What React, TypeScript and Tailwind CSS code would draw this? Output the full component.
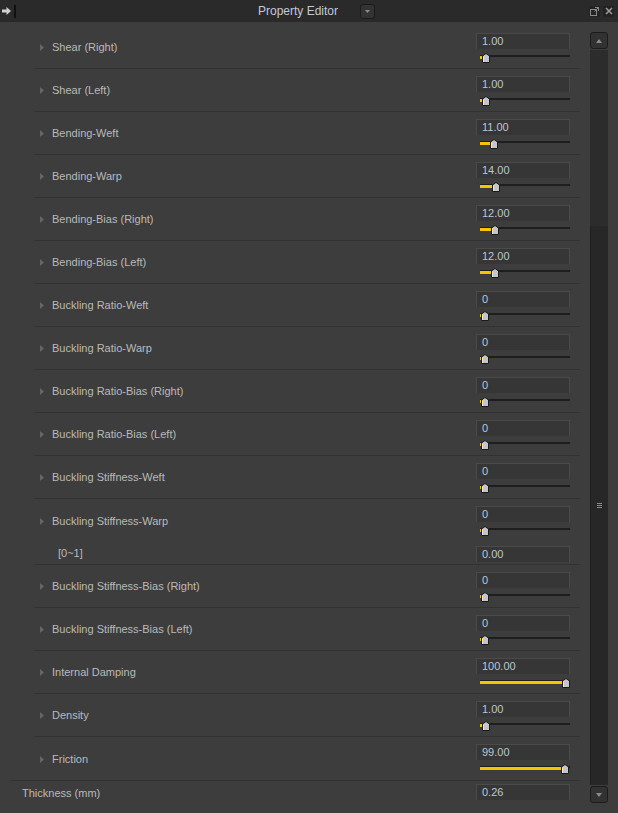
import React from 'react';

type Row =
  | { kind: 'prop'; label: string; value: number; digits?: boolean; border?: boolean }
  | { kind: 'sub'; label: string; value: string };

const rows: Row[] = [
  { kind: 'prop', label: 'Shear (Right)', value: 1, digits: true },
  { kind: 'prop', label: 'Shear (Left)', value: 1, digits: true },
  { kind: 'prop', label: 'Bending-Weft', value: 11, digits: true },
  { kind: 'prop', label: 'Bending-Warp', value: 14, digits: true },
  { kind: 'prop', label: 'Bending-Bias (Right)', value: 12, digits: true },
  { kind: 'prop', label: 'Bending-Bias (Left)', value: 12, digits: true },
  { kind: 'prop', label: 'Buckling Ratio-Weft', value: 0 },
  { kind: 'prop', label: 'Buckling Ratio-Warp', value: 0 },
  { kind: 'prop', label: 'Buckling Ratio-Bias (Right)', value: 0 },
  { kind: 'prop', label: 'Buckling Ratio-Bias (Left)', value: 0 },
  { kind: 'prop', label: 'Buckling Stiffness-Weft', value: 0 },
  { kind: 'prop', label: 'Buckling Stiffness-Warp', value: 0, border: false },
  { kind: 'sub', label: '[0~1]', value: '0.00' },
  { kind: 'prop', label: 'Buckling Stiffness-Bias (Right)', value: 0 },
  { kind: 'prop', label: 'Buckling Stiffness-Bias (Left)', value: 0 },
  { kind: 'prop', label: 'Internal Damping', value: 100, digits: true },
  { kind: 'prop', label: 'Density', value: 1, digits: true },
  { kind: 'prop', label: 'Friction', value: 99, digits: true, border: false },
];

function Caret() {
  return (
    <svg width="4" height="7" viewBox="0 0 4 7" className="shrink-0">
      <polygon points="0,0 4,3.5 0,7" fill="#656565" />
    </svg>
  );
}

function ValueBox({ text }: { text: string }) {
  return (
    <div className="h-[16px] w-[94px] border-x border-t border-[#4a4a4a] bg-[#363636] pl-[5px] text-[11px] leading-[15px] text-[#bcc6d2]">
      {text}
    </div>
  );
}

function Slider({ value }: { value: number }) {
  const left = 1 + value * 0.81;
  return (
    <div className="relative ml-[4px] mt-[4px] h-[10px] w-[90px]">
      <div className="absolute left-0 right-0 top-[2px] h-[2px] bg-[#1e1e1e]" />
      <div className="absolute left-0 top-[3px] h-[3px] bg-[#f6c400]" style={{ width: left + 2 }} />
      <svg width="8" height="10" viewBox="0 0 8 10" className="absolute top-0" style={{ left }}>
        <polygon points="0.5,3 4,0.5 7.5,3 7.5,9.5 0.5,9.5" fill="#c6c6c6" stroke="#1a1a1a" />
        <line x1="1.5" y1="3.5" x2="1.5" y2="9" stroke="#e8e8e8" />
      </svg>
    </div>
  );
}

function PropRow({ label, value, digits, border = true }: { label: string; value: number; digits?: boolean; border?: boolean }) {
  return (
    <div className={`flex h-[43px] ${border ? 'border-b border-[#323232]' : ''}`}>
      <div className="flex flex-1 items-center gap-[8px] pb-[1px] pl-[6px] pt-[2px]">
        <Caret />
        <span className="text-[11px] text-[#bababa]">{label}</span>
      </div>
      <div className="w-[104px] pt-[7px]">
        <ValueBox text={digits ? value.toFixed(2) : String(value)} />
        <Slider value={value} />
      </div>
    </div>
  );
}

function SubRow({ label, value }: { label: string; value: string }) {
  return (
    <div className="flex h-[23px] border-b border-[#323232]">
      <div className="flex flex-1 items-center pl-[24px]">
        <span className="text-[11px] text-[#bababa]">{label}</span>
      </div>
      <div className="w-[104px] pt-[4px]">
        <ValueBox text={value} />
      </div>
    </div>
  );
}

function ScrollButton({ up }: { up: boolean }) {
  return (
    <div className="flex h-[17px] items-center justify-center rounded-[3px] border border-[#1c1c1c] bg-[#323232]">
      <svg width="6" height="4" viewBox="0 0 6 4">
        <polygon points={up ? '0,4 3,0 6,4' : '0,0 3,4 6,0'} fill="#8a8a8a" />
      </svg>
    </div>
  );
}

export default function App() {
  return (
    <div
      className="flex h-[813px] w-[618px] flex-col overflow-hidden bg-[#3d3d3d]"
      style={{ fontFamily: '"Liberation Sans", Arial, sans-serif' }}
    >
      {/* Title bar */}
      <div className="flex h-[22px] shrink-0 items-center bg-[#2a2a2a]">
        <div className="flex w-[258px] items-center gap-[3px] pl-[2px]">
          <svg width="9" height="8" viewBox="0 0 9 8">
            <polygon points="0,2.5 4.5,2.5 4.5,0 9,4 4.5,8 4.5,5.5 0,5.5" fill="#d0d0d0" />
          </svg>
          <div className="h-[13px] w-[2px] bg-[#111111]" />
        </div>
        <span className="text-[12px] text-[#c3c8d6]">Property Editor</span>
        <div className="ml-[22px] flex h-[15px] w-[15px] items-center justify-center rounded-[3px] border border-[#1b1b1b] bg-[#333333]">
          <svg width="5" height="3" viewBox="0 0 5 3">
            <polygon points="0,0 2.5,3 5,0" fill="#8c8c8c" />
          </svg>
        </div>
        <div className="flex-1" />
        <div className="flex items-center gap-[3px] pr-[4px]">
          <div className="flex h-[11px] w-[11px] items-center justify-center bg-[#232323]">
            <svg width="9" height="9" viewBox="0 0 9 9">
              <rect x="0.5" y="2.5" width="6" height="6" fill="none" stroke="#8a8a8a" />
              <polyline points="5,0.5 8.5,0.5 8.5,4" fill="none" stroke="#8a8a8a" />
              <line x1="8.5" y1="0.5" x2="4.5" y2="4.5" stroke="#8a8a8a" />
            </svg>
          </div>
          <div className="flex h-[11px] w-[11px] items-center justify-center bg-[#232323]">
            <svg width="8" height="8" viewBox="0 0 8 8">
              <path d="M1 1 L7 7 M7 1 L1 7" stroke="#9a9a9a" strokeWidth="1.6" />
            </svg>
          </div>
        </div>
      </div>

      {/* Body */}
      <div className="flex min-h-0 flex-1">
        <div className="w-[580px] pl-[10px] pt-[4px]">
          <div className="border-b border-[#323232] pl-[24px]">
            {rows.map((r) =>
              r.kind === 'prop' ? (
                <PropRow key={r.label} label={r.label} value={r.value} digits={r.digits} border={r.border} />
              ) : (
                <SubRow key={r.label} label={r.label} value={r.value} />
              )
            )}
          </div>
          <div className="flex h-[24px]">
            <div className="flex flex-1 items-center pl-[12px]">
              <span className="text-[11px] text-[#bababa]">Thickness (mm)</span>
            </div>
            <div className="w-[104px] pt-[3px]">
              <ValueBox text="0.26" />
            </div>
          </div>
        </div>

        {/* Scrollbar */}
        <div className="ml-[10px] flex w-[18px] flex-col gap-[1px] py-[10px]">
          <ScrollButton up />
          <div className="flex flex-1 flex-col bg-[#2c2c2c]">
            <div className="h-[176px]" />
            <div className="flex flex-1 items-center justify-center rounded-[2px] border-l border-[#1f1f1f] bg-[#272727]">
              <div className="flex flex-col gap-[1px]">
                <div className="h-[1px] w-[5px] bg-[#8a8a8a]" />
                <div className="h-[1px] w-[5px] bg-[#8a8a8a]" />
                <div className="h-[1px] w-[5px] bg-[#8a8a8a]" />
              </div>
            </div>
          </div>
          <ScrollButton up={false} />
        </div>
      </div>
    </div>
  );
}
